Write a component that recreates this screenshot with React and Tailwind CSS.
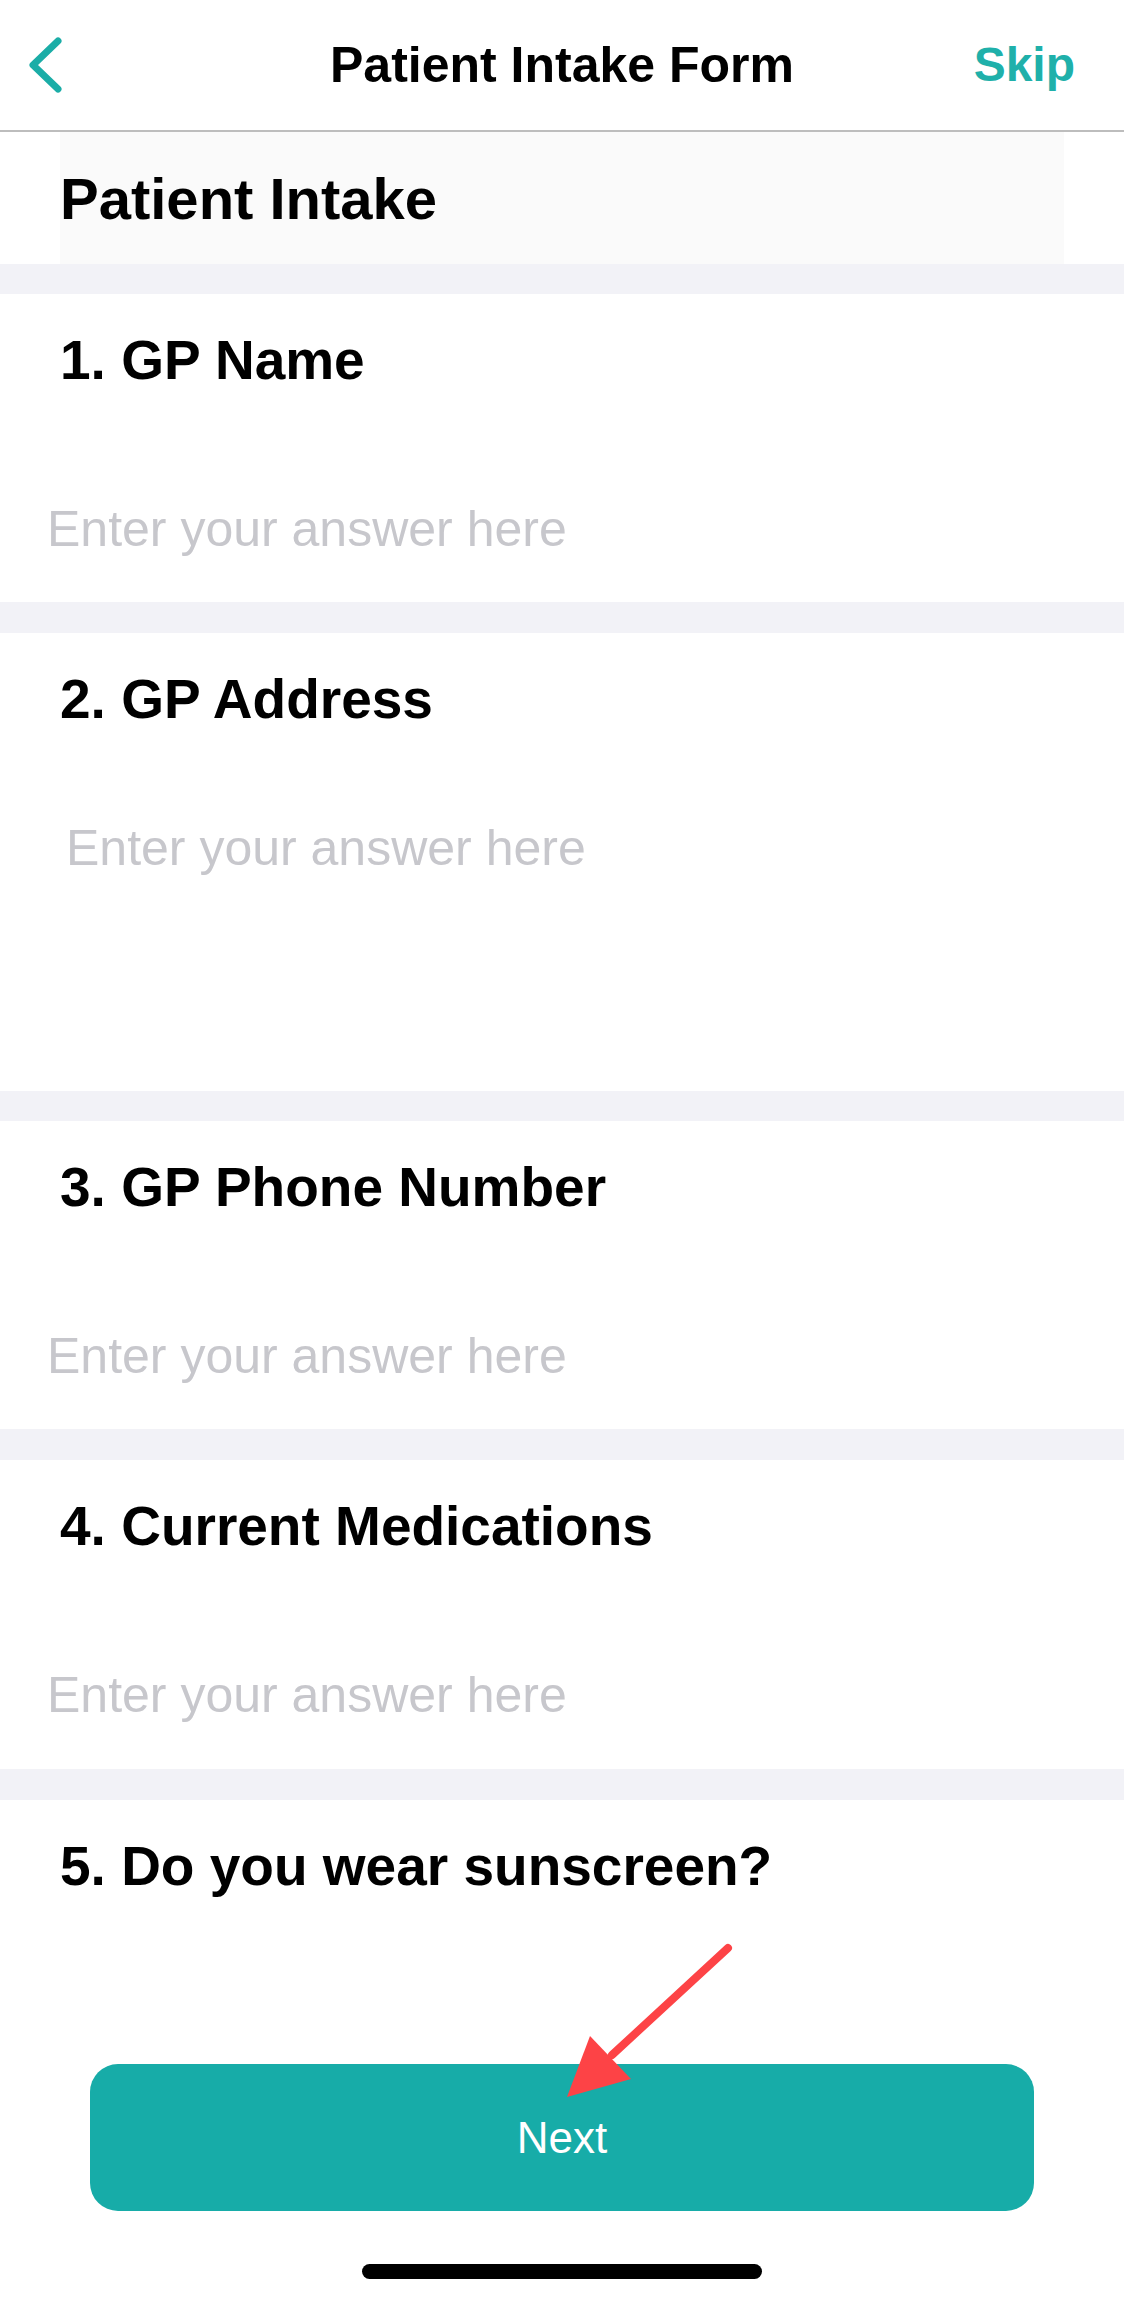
import React from 'react';

const questions = [
  { n: 1, title: 'GP Name', h: 'h-[308px]', pad: 'pl-[47px]', gap: 'mt-[107px]' },
  { n: 2, title: 'GP Address', h: 'h-[458px]', pad: 'pl-[66px]', gap: 'mt-[87px]' },
  { n: 3, title: 'GP Phone Number', h: 'h-[308px]', pad: 'pl-[47px]', gap: 'mt-[107px]' },
  { n: 4, title: 'Current Medications', h: 'h-[309px]', pad: 'pl-[47px]', gap: 'mt-[107px]' },
];

function Question({ q }) {
  return (
    <section className={`${q.h} bg-white flex flex-col`}>
      <h3 className="pt-[34px] pl-[60px] text-[55px] leading-[64px] font-bold text-black">
        {q.n}. {q.title}
      </h3>
      <p className={`${q.gap} ${q.pad} text-[50px] leading-[60px] text-[#c7c7cc]`}>
        Enter your answer here
      </p>
    </section>
  );
}

export default function App() {
  return (
    <div
      className="relative w-[1124px] h-[2304px] bg-white overflow-hidden flex flex-col"
      style={{ fontFamily: '"Liberation Sans", Arial, sans-serif' }}
    >
      {/* nav bar */}
      <header className="h-[132px] shrink-0 grid grid-cols-[1fr_auto_1fr] items-center border-b-2 border-[#bdbdbd]">
        <div className="pl-[27px]">
          <svg width="40" height="56" viewBox="0 0 40 56" fill="none">
            <path d="M31 4 L6 28 L31 52" stroke="#1bada7" strokeWidth="7" strokeLinecap="round" strokeLinejoin="round" />
          </svg>
        </div>
        <h1 className="text-[50px] font-semibold text-black">Patient Intake Form</h1>
        <div className="justify-self-end pr-[49px] text-[48px] font-semibold text-[#1fb0aa]">Skip</div>
      </header>

      <div className="h-[132px] shrink-0 mx-[60px] bg-[#fafafa] flex items-center">
        <h2 className="text-[58px] font-bold text-black">Patient Intake</h2>
      </div>

      {questions.map((q, i) => (
        <React.Fragment key={q.n}>
          <div className={`${i % 2 === 0 ? 'h-[30px]' : 'h-[31px]'} shrink-0 bg-[#f2f2f7]`} />
          <Question q={q} />
        </React.Fragment>
      ))}
      <div className="h-[31px] shrink-0 bg-[#f2f2f7]" />

      <section className="flex-1 bg-white flex flex-col">
        <h3 className="pt-[34px] pl-[60px] text-[55px] leading-[64px] font-bold text-black">
          5. Do you wear sunscreen?
        </h3>
        <button className="mt-[166px] mx-[90px] h-[147px] rounded-[28px] bg-[#17aca8] text-white text-[44px]">
          Next
        </button>
        <div className="mt-[53px] mx-auto w-[400px] h-[15px] rounded-full bg-black" />
      </section>

      {/* annotation arrow */}
      <svg
        className="absolute left-[550px] top-[1930px] pointer-events-none"
        width="200"
        height="180"
        viewBox="0 0 200 180"
      >
        <path d="M178 18 L62 125" stroke="#fd4346" strokeWidth="8" strokeLinecap="round" />
        <polygon points="40,106 81,149 17,167" fill="#fd4346" />
      </svg>
    </div>
  );
}
